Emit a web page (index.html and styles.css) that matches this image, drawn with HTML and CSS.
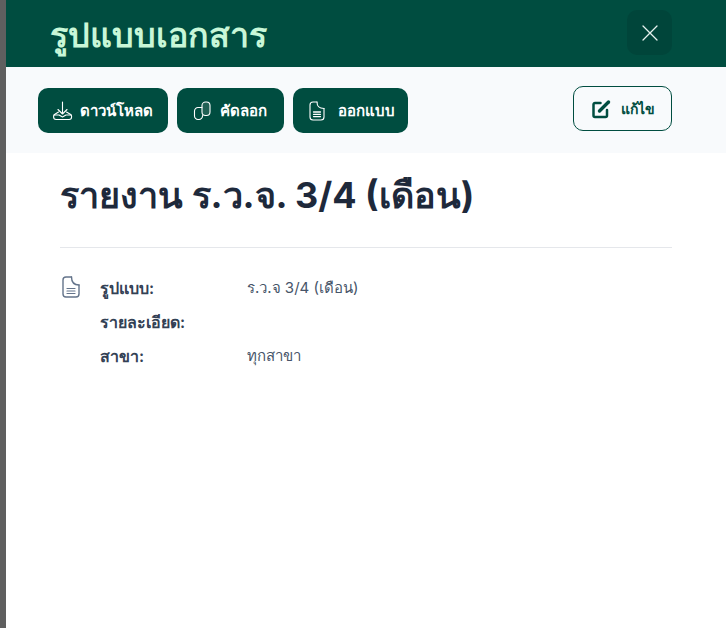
FILE: index.html
```html
<!DOCTYPE html>
<html lang="th">
<head>
<meta charset="utf-8">
<title>รูปแบบเอกสาร</title>
<link rel="stylesheet" href="styles.css">
</head>
<body>
<div class="backdrop"></div>
<main class="panel">
  <header class="head">
    <h1 class="head-title">รูปแบบเอกสาร</h1>
    <button class="close" aria-label="ปิด">
      <svg width="18" height="18" viewBox="0 0 18 18" fill="none" stroke="currentColor" stroke-width="1.3" stroke-linecap="round"><path d="M2 2l14 14M16 2L2 16"/></svg>
    </button>
  </header>
  <div class="toolbar">
    <div class="actions">
      <button class="btn">
        <svg class="ico" width="20" height="20" viewBox="0 0 20 20" fill="none" stroke="currentColor" stroke-width="1.1" stroke-linecap="round" stroke-linejoin="round"><path d="M9.500 1v12M5 8.500l4.500 4.500L14 8.500"/><path d="M5.500 11L1.500 13.500Q.6 14.200.6 15.500v.5A2.500 2.500 0 0 0 3.100 18.500h13A2.500 2.500 0 0 0 18.600 16v-.5Q18.600 14.200 17.700 13.500L13.500 11"/><path d="M1 14h5l3.500 2 3.500-2h5"/></svg>
        <span>ดาวน์โหลด</span>
      </button>
      <button class="btn btn-copy">
        <svg class="ico" width="20" height="20" viewBox="0 0 20 20" fill="none" stroke="currentColor" stroke-width="1.1" stroke-linecap="round" stroke-linejoin="round"><rect x="10" y="1" width="8" height="13.500" rx="3.500" fill="#6b8f85" fill-opacity=".3"/><path d="M10 6.500H6.500A3.500 3.500 0 0 0 2.500 10v5A3.500 3.500 0 0 0 6 18.500h1A3.500 3.500 0 0 0 10.500 15v-.5"/></svg>
        <span>คัดลอก</span>
      </button>
      <button class="btn btn-design">
        <svg class="ico" width="20" height="20" viewBox="0 0 20 20" fill="none" stroke="currentColor" stroke-width="1.1" stroke-linejoin="round" stroke-linecap="round"><path d="M9 1H5a3 3 0 0 0-3 3v12a3 3 0 0 0 3 3h8a3 3 0 0 0 3-3V7.500"/><path d="M9 1c0 4.500 2 6.500 7 6.500"/><path d="M5.500 11h7M5.500 13.300h7M5.500 15.600h7" stroke-width="1.300"/></svg>
        <span>ออกแบบ</span>
      </button>
    </div>
    <button class="btn-edit">
      <svg class="ico" width="20" height="20" viewBox="0 0 20 20" fill="none" stroke="currentColor" stroke-width="2.500" stroke-linecap="round" stroke-linejoin="round"><path d="M8.500 4H3A1.500 1.500 0 0 0 1.500 5.500v11A1.500 1.500 0 0 0 3 18h10.500a1.500 1.500 0 0 0 1.500-1.500V11"/><path d="M7.500 12L16.500 3" stroke-width="3.400"/></svg>
      <span>แก้ไข</span>
    </button>
  </div>
  <section class="content">
    <h2 class="doc-title">รายงาน ร.ว.จ. 3/4 (เดือน)</h2>
    <div class="details">
      <svg class="doc-ico" width="20" height="24" viewBox="0 0 20 24" fill="none" stroke="#64748b" stroke-width="1.400" stroke-linejoin="round" stroke-linecap="round"><path d="M10.500 2H5a3 3 0 0 0-3 3v14a3 3 0 0 0 3 3h10a3 3 0 0 0 3-3V10"/><path d="M10.500 2c0 5 2 8 7.500 8"/><path d="M6 13.500h8M6 16h8M6 18.500h8" stroke-width="1.200"/></svg>
      <dl class="rows">
        <dt>รูปแบบ:</dt><dd>ร.ว.จ 3/4 (เดือน)</dd>
        <dt>รายละเอียด:</dt><dd></dd>
        <dt>สาขา:</dt><dd>ทุกสาขา</dd>
      </dl>
    </div>
  </section>
</main>
</body>
</html>
```
FILE: styles.css
```css
* { box-sizing: border-box; }
html, body { margin: 0; height: 100%; }
body {
  display: flex;
  height: 628px;
  overflow: hidden;
  background: #fff;
  font-family: Inter, "Noto Sans", "Noto Sans CJK SC", sans-serif;
  color: #1e293b;
}
.backdrop {
  width: 6px;
  flex: none;
  background: #5f5f5f;
}
.panel { flex: 1; min-width: 0; display: flex; flex-direction: column; }
.head {
  height: 67px;
  background: #004d40;
  display: flex;
  align-items: center;
  justify-content: space-between;
  padding: 0 54px 0 44px;
}
.head-title {
  margin: 0;
  padding-top: 3px;
  font-size: 34px;
  line-height: 36px;
  font-weight: 600;
  color: #c8f7d8;
}
.close {
  width: 45px;
  height: 45px;
  margin-bottom: 2px;
  border: 0;
  border-radius: 10px;
  background: #00453a;
  color: #e6f2ef;
  display: flex;
  align-items: center;
  justify-content: center;
  padding: 0;
}
.toolbar {
  height: 86px;
  background: #f8fafc;
  display: flex;
  align-items: center;
  justify-content: space-between;
  padding: 0 54px 0 32px;
}
.actions { display: flex; gap: 9px; margin-top: 1px; }
.btn {
  height: 45px;
  border: 0;
  border-radius: 10px;
  background: #004d40;
  color: #fff;
  display: flex;
  align-items: center;
  gap: 7px;
  padding: 0 15px;
  font: 600 15px/20px Inter, "Noto Sans", sans-serif;
}
.btn-copy { gap: 8px; padding-right: 17px; }
.btn-design { gap: 10px; padding-right: 13px; }
.btn-edit {
  height: 45px;
  margin-bottom: 3px;
  border: 1px solid #004d40;
  border-radius: 10px;
  background: transparent;
  color: #004d40;
  display: flex;
  align-items: center;
  gap: 9px;
  padding: 0 16px 0 18px;
  font: 600 14px/20px Inter, "Noto Sans", sans-serif;
}
.ico { flex: none; }
.content { padding: 0 54px 0 54px; }
.doc-title {
  margin: 0;
  padding: 22px 0 31px;
  border-bottom: 1px solid #e5e7eb;
  font-size: 36px;
  line-height: 41px;
  font-weight: 700;
  color: #1e293b;
}
.details { display: flex; gap: 19px; padding-top: 30px; }
.doc-ico { flex: none; margin: -3px 0 0 1px; }
.rows {
  margin: 0;
  display: grid;
  grid-template-columns: 147px 1fr;
  row-gap: 14px;
  font-size: 15px;
  line-height: 20px;
  flex: 1;
}
.rows dt { font-size: 16px; font-weight: 600; color: #334155; }
.rows dd { margin: 0; color: #475569; }
```
